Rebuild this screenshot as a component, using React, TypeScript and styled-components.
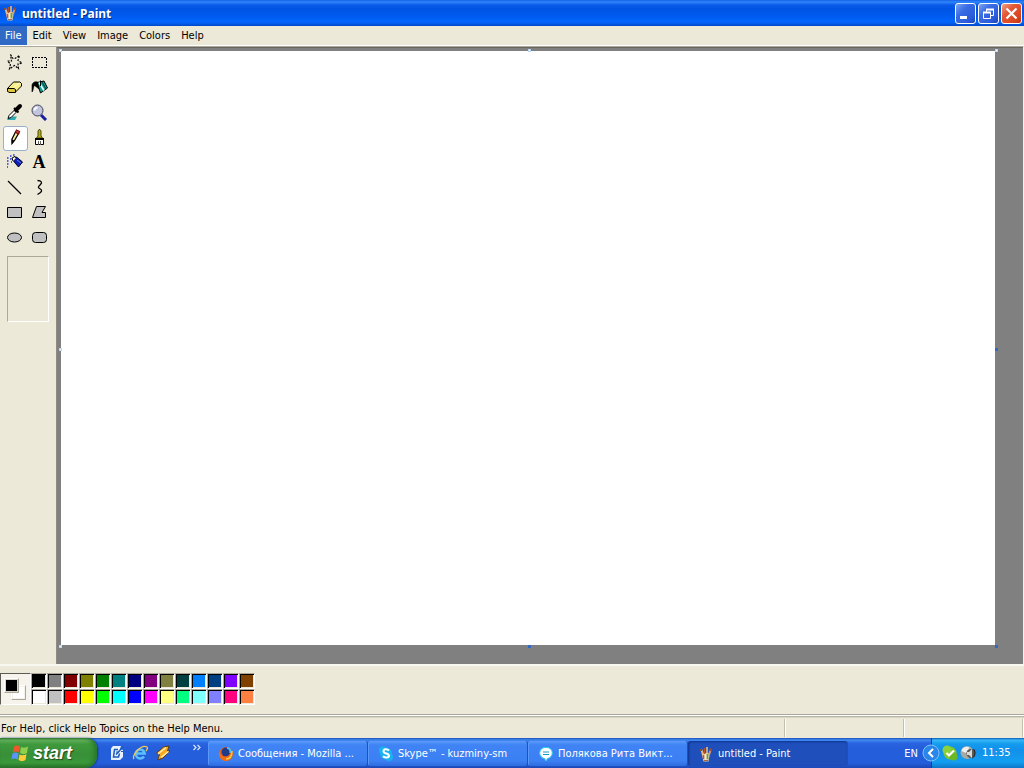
import React from "react";
import styled, { createGlobalStyle, css } from "styled-components";

const Global = createGlobalStyle`
  * { box-sizing: border-box; }
  html, body { margin: 0; padding: 0; }
  body { background: #ece9d8; color: #000; font: 11px/14px "DejaVu Sans Condensed", "Liberation Sans", sans-serif; }
  button { font: inherit; color: inherit; border: 0; padding: 0; margin: 0; background: none; cursor: default; }
  svg { display: block; flex: none; }
`;

const Window = styled.div`
  display: flex;
  flex-direction: column;
  min-height: 100vh;
`;

const TitleBar = styled.header`
  display: flex;
  align-items: center;
  height: 26px;
  padding: 0 2px;
  gap: 4px;
  background: linear-gradient(#1660e8 0, #2f86fb 2px, #0a5ae8 5px, #0054e3 9px, #005cf2 17px, #0266fc 22px, #0148c8 26px);
`;

const Title = styled.h1`
  flex: 1;
  margin: 0;
  padding-top: 1px;
  color: #fff;
  font: bold 12px/16px "Noto Sans", "Open Sans", sans-serif;
  text-shadow: 1px 1px 0 #0a2a82;
`;

const Controls = styled.div`
  display: flex;
  gap: 2px;
`;

const ControlButton = styled.button<{ $close?: boolean }>`
  display: grid;
  place-items: center;
  width: 21px;
  height: 21px;
  border: 1px solid #fff;
  border-radius: 3px;
  background: ${(p) =>
    p.$close
      ? "linear-gradient(135deg, #f0a088 0, #e35b38 35%, #d8431c 80%, #b8320f 100%)"
      : "linear-gradient(135deg, #7da4f3 0, #3a6ce4 35%, #2a5cdc 75%, #1b45b8 100%)"};
`;

const MenuBar = styled.nav`
  display: flex;
  height: 20px;
  border-bottom: 1px solid #fff;
`;

const MenuItem = styled.button<{ $open?: boolean }>`
  height: 19px;
  padding: 0 6px 0 5px;
  ${(p) => p.$open && css`background: #316ac5; color: #fff;`}
`;

const Work = styled.main`
  display: flex;
  flex: 1;
  border-top: 1px solid #aca899;
  border-right: 1px solid #f4f2e8;
`;

const ToolBox = styled.aside`
  width: 57px;
  padding: 4px 0 0 3px;
  border-right: 1px solid #8e8c80;
`;

const ToolGrid = styled.div`
  display: grid;
  grid-template-columns: repeat(2, 25px);
  grid-auto-rows: 25px;
`;

const ToolButton = styled.button<{ $active?: boolean }>`
  display: flex;
  align-items: flex-start;
  padding: 1px;
  border: 1px solid ${(p) => (p.$active ? "#98b0cc" : "transparent")};
  border-radius: 3px;
  background: ${(p) => (p.$active ? "#fff" : "none")};
`;

const ToolOptions = styled.div`
  width: 42px;
  height: 66px;
  margin: 5px 0 0 4px;
  border: 1px solid;
  border-color: #aca899 #fff #fff #aca899;
`;

const Desk = styled.section`
  display: flex;
  flex: 1;
  padding: 3px 28px 19px 4px;
  background: #808080;
  border-top: 1px solid #68675f;
`;

const Paper = styled.div`
  position: relative;
  flex: 1;
  background: #fff;
`;

const Handle = styled.i<{ $x: string; $y: string; $light?: boolean }>`
  position: absolute;
  left: ${(p) => p.$x};
  top: ${(p) => p.$y};
  width: 3px;
  height: 3px;
  background: ${(p) => (p.$light ? "#fff" : "#316ac5")};
  border: ${(p) => (p.$light ? "1px solid #bcd6f4" : "0")};
`;

const ColorBox = styled.section`
  display: flex;
  height: 51px;
  padding-top: 7px;
  border-top: 2px solid #f8f7f0;
  border-bottom: 1px solid #aca899;
`;

const CurrentColors = styled.div`
  position: relative;
  width: 31px;
  height: 32px;
  border: 1px solid;
  border-color: #5c5b54 #fff #fff #5c5b54;
  background: #f5f3ec;
`;

const ColorChip = styled.span<{ $front?: boolean }>`
  position: absolute;
  left: ${(p) => (p.$front ? 3 : 10)}px;
  top: ${(p) => (p.$front ? 4 : 11)}px;
  width: 15px;
  height: 15px;
  border: 1px solid;
  border-color: #fff #aca899 #aca899 #fff;
  background: ${(p) => (p.$front ? "#000" : "#fff")};
  box-shadow: inset 0 0 0 1px ${(p) => (p.$front ? "#d8d5c8" : "#f4f2ea")};
`;

const Palette = styled.div`
  display: grid;
  grid-template-columns: repeat(14, 16px);
  grid-auto-rows: 16px;
`;

const Swatch = styled.button<{ $color: string }>`
  border: 1px solid;
  border-color: #aca899 #fff #fff #aca899;
  background: ${(p) => p.$color};
  box-shadow: inset 1px 1px 0 #000, inset -1px -1px 0 #ece9d8;
`;

const StatusBar = styled.footer`
  display: flex;
  height: 23px;
  padding: 3px 1px 0;
  border-top: 1px solid #fff;
  box-shadow: inset 0 1px 0 #b9b6a6, inset 0 2px 0 #d8d4c4;
`;

const StatusCell = styled.div<{ $width?: number }>`
  ${(p) => (p.$width ? css`width: ${p.$width}px;` : css`flex: 1;`)}
  height: 18px;
  line-height: 19px;
  border-right: 1px solid #c4c0b0;
  box-shadow: 1px 0 0 #fff;
`;

const TaskBar = styled.footer`
  display: flex;
  height: 30px;
  color: #fff;
  background: linear-gradient(#1d4eb8 0, #3f8cf3 2px, #2a64e0 5px, #245edb 10px, #245edb 25px, #1c48b4 30px);
`;

const StartButton = styled.button`
  display: flex;
  align-items: center;
  gap: 4px;
  width: 97px;
  padding-left: 11px;
  border-radius: 0 10px 12px 0;
  color: #fff;
  font: italic bold 18px/20px "Liberation Sans", Arial, sans-serif;
  text-shadow: 1px 1px 1px #1c4a1a;
  background: linear-gradient(#2f7a2d 0, #68b463 2px, #3f9a3c 6px, #388f38 16px, #3a983a 25px, #256e26 30px);
  box-shadow: inset -3px 0 4px #2b772b, 1px 0 2px #143a94;
`;

const QuickLaunch = styled.div`
  display: flex;
  align-items: center;
  gap: 7px;
  width: 111px;
  padding-left: 12px;
`;

const QuickButton = styled.button`
  width: 16px;
  height: 16px;
`;

const MoreButton = styled.button`
  align-self: flex-start;
  margin: 6px 0 0 14px;
  width: 10px;
  height: 8px;
`;

const Tasks = styled.div`
  display: flex;
  flex: 1;
  padding: 3px 0 2px;
`;

const Task = styled.button<{ $active?: boolean }>`
  display: flex;
  align-items: center;
  gap: 4px;
  width: 160px;
  padding-left: 10px;
  border-radius: 3px;
  border-right: 1px solid #1f4fc0;
  white-space: nowrap;
  background: ${(p) =>
    p.$active
      ? "#1e4fba"
      : "linear-gradient(#5c9afa 0, #3f83f5 4px, #3b80f3 20px, #2f6be0 100%)"};
  box-shadow: ${(p) => (p.$active ? "inset 1px 1px 2px #10348c" : "inset 1px 1px 0 #5b98fb")};
`;

const Language = styled.button`
  width: 35px;
  padding: 1px 13px 0 0;
  text-align: right;
  white-space: nowrap;
`;

const Tray = styled.div`
  display: flex;
  align-items: center;
  width: 93px;
  gap: 2px;
  border-left: 1px solid #10409c;
  background: linear-gradient(#0c59b9 0, #36b6f6 2px, #139bee 6px, #1290e9 12px, #139ef1 24px, #0d76c8 30px);
`;

const TrayButton = styled.button<{ $expand?: boolean }>`
  ${(p) => p.$expand && css`margin-left: -10px;`}
`;

const Clock = styled.time`
  margin-left: 4px;
  white-space: nowrap;
`;

const Svg = ({ s = 18, children }: { s?: number; children: React.ReactNode }) => (
  <svg width={s} height={s} viewBox={`0 0 ${s} ${s}`} fill="none" aria-hidden="true">
    {children}
  </svg>
);

const PaintIcon = () => (
  <Svg s={16}>
    <path d="M3.500 7h8.500l-1.500 8.500h-5z" fill="#d8c8a8" />
    <path d="M5 8 3 3" stroke="#e8b884" strokeWidth="2" />
    <path d="M3 5V3" stroke="#8a5030" strokeWidth="2" />
    <path d="M6.500 8V2" stroke="#b8502c" strokeWidth="1.500" />
    <path d="M9 8V1" stroke="#ecc880" strokeWidth="1.500" />
    <path d="m11 9 2-6" stroke="#d89860" strokeWidth="2" />
    <path d="m12.500 5 .8-2.500" stroke="#9c4424" strokeWidth="2" />
    <path d="M5.500 9v4" stroke="#e04828" strokeWidth="1.500" />
    <path d="M7.500 8v6" stroke="#f4ecd0" strokeWidth="1.500" />
    <path d="M9.500 8v5" stroke="#58a840" strokeWidth="1.500" />
    <path d="M6 14.500h4" stroke="#a86838" />
  </Svg>
);

const tools: { name: string; icon: React.ReactNode; active?: boolean }[] = [
  {
    name: "Free-Form Select",
    icon: <Svg><path d="m5.500 1.500 2.500 4h2l4.500-3-1.500 5 4 2.500-4 1 .5 4.500-4-3-5 3.500 1-5-3-3h4z" stroke="#000" strokeWidth="1.200" strokeDasharray="2 1.200" /></Svg>,
  },
  {
    name: "Select",
    icon: <Svg><path d="M2 4.500h15M2 14.500h15M2.500 5v10M16.500 5v10" stroke="#000" strokeDasharray="2 1" shapeRendering="crispEdges" /></Svg>,
  },
  {
    name: "Eraser",
    icon: <Svg><path d="M2.500 10.500 8.500 4h6.500l1.500 1.500V8l-6.500 6.500H4L2.500 13z" fill="#f8ef86" stroke="#000" /><path d="M2.500 10.500H9l1.500 1v3H4L2.500 13z" fill="#dcc838" stroke="#000" /><path d="m9 9 5.500-4" stroke="#fffde0" /></Svg>,
  },
  {
    name: "Fill With Color",
    icon: <Svg><path d="M7 4.500 14 3l3.500 7-7 5z" fill="#159a91" stroke="#000" /><path d="m9 4.500 5 8" stroke="#e4ffff" strokeWidth="1.600" /><path d="m12 4 4 7" stroke="#083c40" /><path d="M7.500 4c-3-1-5 1-5.500 3v7c1.500-1 1-5 2.500-6.500L9 11z" fill="#000" stroke="#000" strokeWidth=".6" /><path d="M10.500 8V2.500" stroke="#000" /></Svg>,
  },
  {
    name: "Pick Color",
    icon: <Svg><path d="M4 13.500h8L10 17H2z" fill="#30a8b0" /><path d="m3 15.500 1-3 6-6 2 2-6 6z" fill="#fff" stroke="#000" /><path d="m9 5 4.500 4.500" stroke="#000" strokeWidth="2" /><path d="m11 7 4-4" stroke="#000" strokeWidth="4" strokeLinecap="round" /></Svg>,
  },
  {
    name: "Magnifier",
    icon: <Svg><path d="m11 12 5 5" stroke="#1820a0" strokeWidth="3" /><circle cx="7.5" cy="7.500" r="5.500" fill="#c0c4dc" stroke="#404058" /><path d="M4.500 7.500a3 3 0 0 1 3-3" stroke="#fff" strokeWidth="2" /></Svg>,
  },
  {
    name: "Pencil",
    active: true,
    icon: <Svg><path d="m7 11 3.500-7 3 1.500-4 7-2.500 3z" fill="#fbef94" stroke="#000" strokeWidth="1.300" /><path d="m10.500 4 1-2 3 1.500-1 2.500z" fill="#e06060" stroke="#801010" strokeWidth="1.300" /><path d="m6.500 11.500 3 1L7 16z" fill="#000" /></Svg>,
  },
  {
    name: "Brush",
    icon: <Svg><path d="M8 8V3l1-1.500h1L11 3v5l1.500 2h-6z" fill="#b0a820" stroke="#504c00" /><path d="M5.500 10.500h8v6h-8z" fill="#fff" stroke="#000" /><path d="M5 11h9" stroke="#000" strokeWidth="2" /><path d="M8.500 13v4m2-4v4" stroke="#606060" /></Svg>,
  },
  {
    name: "Airbrush",
    icon: <Svg><path d="M2 5h2m1-2h2m1-1h2M2 8h2m-2 3h2m-2 3h1M5 6h2m-1 3h1M9 4h2" stroke="#2434d8" strokeWidth="1.500" strokeDasharray="1 .5" /><path d="m8.500 8 3-4 6 5-4 5z" fill="#1020b8" stroke="#000020" /><path d="m8 8-1-3 3-1.500L11 5" fill="#fff" stroke="#000" /><path d="m12 7 4 3" stroke="#6080f0" /></Svg>,
  },
  {
    name: "Text",
    icon: <Svg><text x="9" y="15" textAnchor="middle" fontFamily="Liberation Serif, serif" fontWeight="bold" fontSize="18" fill="#000">A</text></Svg>,
  },
  { name: "Line", icon: <Svg><path d="m3 3 13 13" stroke="#000" strokeWidth="1.300" /></Svg> },
  { name: "Curve", icon: <Svg><path d="M7.500 2.500c4 0 5 2 3 4s-3 3-1 4 3 2 1 4l-3 2" stroke="#000" strokeWidth="1.300" /></Svg> },
  { name: "Rectangle", icon: <Svg><path d="M2.500 4.500h14v10h-14z" fill="#c0c0c0" stroke="#000" /></Svg> },
  { name: "Polygon", icon: <Svg><path d="M6.500 3.500h9l-3.500 6h3.500v5h-13z" fill="#c0c0c0" stroke="#000" /></Svg> },
  { name: "Ellipse", icon: <Svg><ellipse cx="9.5" cy="9.5" rx="7" ry="4.500" fill="#c0c0c0" stroke="#000" /></Svg> },
  { name: "Rounded Rectangle", icon: <Svg><rect x="2.5" y="4.500" width="14" height="10" rx="3" fill="#c0c0c0" stroke="#000" /></Svg> },
];

const colors = [
  "#000000", "#808080", "#800000", "#808000", "#008000", "#008080", "#000080", "#800080", "#808040", "#004040", "#0080ff", "#004080", "#8000ff", "#804000",
  "#ffffff", "#c0c0c0", "#ff0000", "#ffff00", "#00ff00", "#00ffff", "#0000ff", "#ff00ff", "#ffff80", "#00ff80", "#80ffff", "#8080ff", "#ff0080", "#ff8040",
];

const tasks: { label: string; icon: React.ReactNode; active?: boolean }[] = [
  {
    label: "Сообщения - Mozilla ...",
    icon: <Svg s={16}><circle cx="8" cy="8" r="7" fill="#e8601c" /><circle cx="8" cy="6" r="4.500" fill="#203c88" /><path d="M9 2c3 0 4 3 3 5" stroke="#4cc0f0" strokeWidth="2" /><path d="M1 5c1 5 5 7 9 5l4-5c1 6-2 10-6 10S0 11 1 5" fill="#f06c1c" /><path d="M14 5c0 5-2 8-6 8" stroke="#fcc838" strokeWidth="1.500" /></Svg>,
  },
  {
    label: "Skype™ - kuzminy-sm",
    icon: <Svg s={16}><circle cx="8" cy="7.500" r="6" fill="#18b4f0" /><circle cx="5" cy="4.500" r="4" fill="#18b4f0" /><circle cx="11" cy="11" r="4" fill="#18b4f0" /><path d="M11 4.500C9 2.500 5.500 3 5.500 5.200c0 2.800 5.500 1.800 5.500 4.500 0 2.300-4 2.500-6 .5" stroke="#fff" strokeWidth="2" /></Svg>,
  },
  {
    label: "Полякова Рита Викт...",
    icon: <Svg s={16}><path d="M8 1.500a5.500 5.500 0 0 1 1.500 11L8 15l-1.500-2.500A5.500 5.500 0 0 1 8 1.500" fill="#fff" stroke="#28d0ec" /><path d="M5 6h6m-6 2.500h6" stroke="#109cc8" strokeWidth="1.200" /></Svg>,
  },
  { label: "untitled - Paint", icon: <PaintIcon />, active: true },
];

const quick = [
  {
    name: "Show Desktop",
    icon: <Svg s={16}><path d="M2 3.500 4 1h8l-1 3 3 1v7l-3 3H2z" fill="#e8f2ff" /><path d="M9 4.500H5.500L4.500 12h5l1-3.500M7 9.500 14 2" stroke="#1c5cb8" strokeWidth="1.500" /><path d="M12 6.500h3M7 7h3" stroke="#1c5cb8" /></Svg>,
  },
  {
    name: "Internet Explorer",
    icon: <Svg s={16}><path d="M12 11.500a4.500 4.500 0 1 1 .7-3H5" stroke="#5cc0fc" strokeWidth="2.500" /><path d="M2 14C-1 11 9-1 15 2c1 .5 0 3-1 4" stroke="#f4c850" strokeWidth="1.300" /></Svg>,
  },
  {
    name: "Winamp",
    icon: <Svg s={16}><path d="m1.500 8 7-6 5.500-1-1.500 5H15l-7 7-5.500 2 2-5.500z" fill="#f8a820" stroke="#5c3c18" /><path d="m3 9 8-6.500M6 12.500l7.500-6" stroke="#fff0b0" strokeWidth="1.500" /></Svg>,
  },
];

const handles: [string, string, boolean][] = [
  ["-2px", "-2px", true],
  ["50%", "-2px", true],
  ["100%", "-2px", true],
  ["-2px", "50%", true],
  ["100%", "50%", false],
  ["50%", "100%", false],
  ["100%", "100%", false],
  ["-2px", "100%", true],
];

export default function App() {
  return (
    <Window>
      <Global />
      <TitleBar>
        <PaintIcon />
        <Title>untitled - Paint</Title>
        <Controls>
          <ControlButton aria-label="Minimize">
            <Svg s={19}><path d="M4 13.500h7" stroke="#fff" strokeWidth="3" /></Svg>
          </ControlButton>
          <ControlButton aria-label="Restore">
            <Svg s={19}><path d="M7.500 8V5.500h7v6H12M4.500 8.500h7v6h-7z" stroke="#fff" /><path d="M7 5.500h8M4 8.500h8" stroke="#fff" strokeWidth="2" /></Svg>
          </ControlButton>
          <ControlButton aria-label="Close" $close>
            <Svg s={19}><path d="m4.500 4.500 10 10m0-10-10 10" stroke="#fff" strokeWidth="2.200" /></Svg>
          </ControlButton>
        </Controls>
      </TitleBar>
      <MenuBar>
        {["File", "Edit", "View", "Image", "Colors", "Help"].map((m, i) => (
          <MenuItem key={m} $open={i === 0}>{m}</MenuItem>
        ))}
      </MenuBar>
      <Work>
        <ToolBox>
          <ToolGrid>
            {tools.map((t) => (
              <ToolButton key={t.name} aria-label={t.name} aria-pressed={!!t.active} $active={t.active}>
                {t.icon}
              </ToolButton>
            ))}
          </ToolGrid>
          <ToolOptions />
        </ToolBox>
        <Desk>
          <Paper>
            {handles.map(([x, y, light]) => (
              <Handle key={x + y} $x={x} $y={y} $light={light} />
            ))}
          </Paper>
        </Desk>
      </Work>
      <ColorBox>
        <CurrentColors>
          <ColorChip />
          <ColorChip $front />
        </CurrentColors>
        <Palette>
          {colors.map((c) => (
            <Swatch key={c} $color={c} aria-label={c} />
          ))}
        </Palette>
      </ColorBox>
      <StatusBar>
        <StatusCell>For Help, click Help Topics on the Help Menu.</StatusCell>
        <StatusCell $width={119} />
        <StatusCell $width={119} />
      </StatusBar>
      <TaskBar>
        <StartButton>
          <Svg s={18}>
            <path d="M3 2.500c2-1.500 4-1.500 6 0L8 8.500C6 7 4 7 2 8.500z" fill="#f0582c" />
            <path d="M10 3c2 1 4 1 7-.5l-1 6.500c-2 1.500-5 1.500-7 0z" fill="#8cd04c" />
            <path d="M1.500 9.500c2-1.500 4-1.500 6 0l-1 6c-2-1.500-4-1.500-6 0z" fill="#5c94fc" />
            <path d="M8.500 10.500c2 1 5 1 7-.5l-1 6c-2 1.500-5 1.500-7 0z" fill="#fccc3c" />
          </Svg>
          start
        </StartButton>
        <QuickLaunch>
          {quick.map((q) => (
            <QuickButton key={q.name} aria-label={q.name}>{q.icon}</QuickButton>
          ))}
          <MoreButton aria-label="More">
            <Svg s={10}><path d="m1.500 1 2.500 2.500L1.500 6m4-5L8 3.500 5.500 6" stroke="#d8e8ff" strokeWidth="1.200" /></Svg>
          </MoreButton>
        </QuickLaunch>
        <Tasks>
          {tasks.map((t) => (
            <Task key={t.label} $active={t.active}>
              {t.icon}
              {t.label}
            </Task>
          ))}
        </Tasks>
        <Language>EN</Language>
        <Tray>
          <TrayButton $expand aria-label="Show hidden icons">
            <Svg s={18}><circle cx="9" cy="9" r="8" fill="#2a86e8" stroke="#7cc0fa" /><path d="m11 5-4 4 4 4" stroke="#fff" strokeWidth="2" /></Svg>
          </TrayButton>
          <TrayButton aria-label="Skype">
            <Svg s={16}><circle cx="8" cy="8" r="6.500" fill="#7cc62c" /><circle cx="5" cy="5" r="4.500" fill="#8cd03c" /><circle cx="11.500" cy="11.500" r="4" fill="#6cb824" /><path d="m4.500 8 2.500 2.500 5-5" stroke="#fff" strokeWidth="2.200" /></Svg>
          </TrayButton>
          <TrayButton aria-label="Volume">
            <Svg s={16}><circle cx="7" cy="7.500" r="6.500" fill="#a8a8a4" /><path d="M1.500 6c1-4 5-5 8-3.500L6 8z" fill="#f0f0ec" /><circle cx="11" cy="8.500" r="4.500" fill="#585858" /><path d="M7 7h2l3-3v9l-3-3H7z" fill="#d8d8d4" /><path d="M13.500 4c2 2 2 7-1 9" stroke="#202020" /></Svg>
          </TrayButton>
          <Clock>11:35</Clock>
        </Tray>
      </TaskBar>
    </Window>
  );
}
